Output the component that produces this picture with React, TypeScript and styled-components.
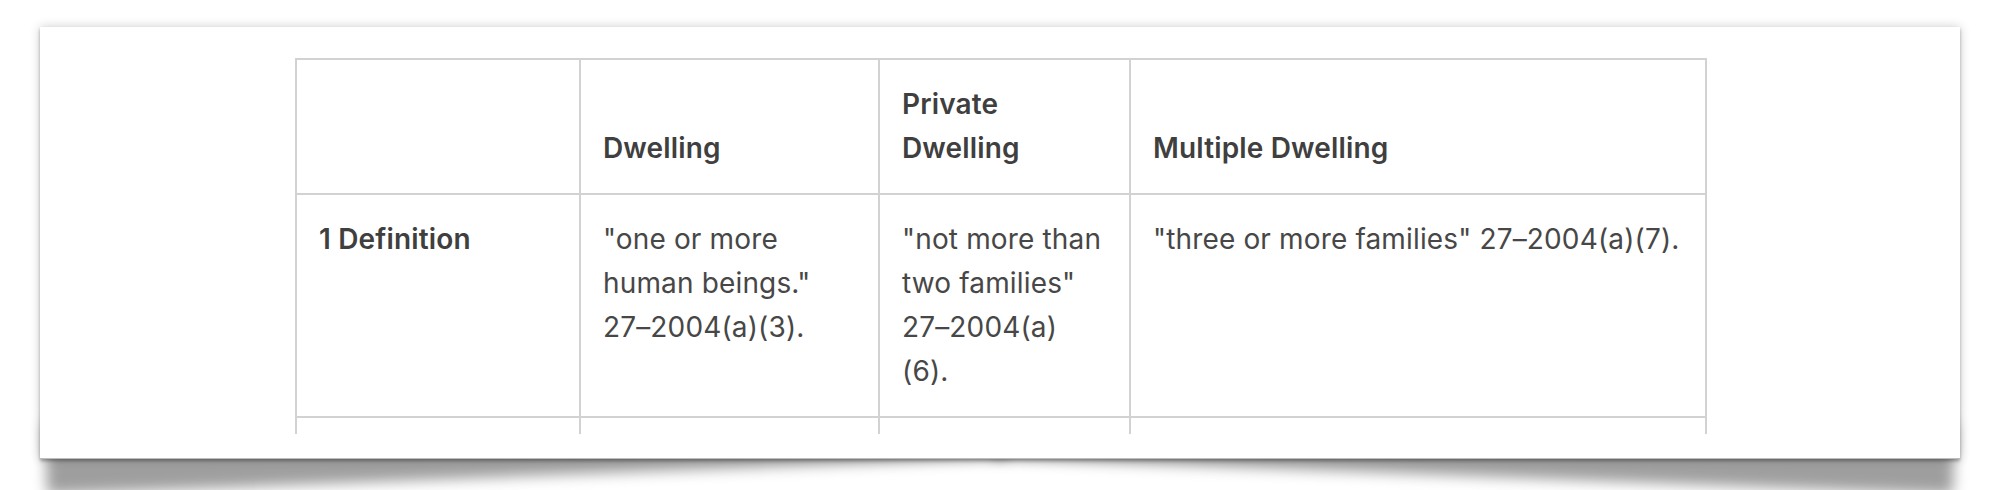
import React from "react";
import styled, { createGlobalStyle } from "styled-components";

const Global = createGlobalStyle`
  html, body { margin: 0; padding: 0; background: #ffffff; }
  body { font-family: Inter, "Noto Sans", "Liberation Sans", sans-serif; overflow: hidden; }
`;

const Page = styled.div`
  position: relative;
  z-index: 0;
  padding: 27px 40px 0;
  height: 490px;
  box-sizing: border-box;
  overflow: hidden;
`;

const Card = styled.div`
  position: relative;
  background: #ffffff;
  height: 432px;
  box-sizing: border-box;
  padding: 31px 0 25px;
  display: flex;
  justify-content: center;
  border-bottom: 1px solid #bdbdbd;
  box-shadow: 0 2px 3px rgba(0, 0, 0, 0.28), 0 0 10px rgba(0, 0, 0, 0.2);

  &::before,
  &::after {
    content: "";
    position: absolute;
    z-index: -1;
    bottom: 22px;
    width: 50%;
    height: 70px;
    box-shadow: 0 40px 14px rgba(0, 0, 0, 0.38);
  }
  &::before {
    left: 4px;
    transform: rotate(-2.2deg);
  }
  &::after {
    right: 4px;
    transform: rotate(2.2deg);
  }
`;

const Clip = styled.div`
  width: 1414px;
  padding: 0 2px;
  box-sizing: border-box;
  height: 376px;
  overflow: hidden;
`;

const Table = styled.table`
  width: 1410px;
  table-layout: fixed;
  border-collapse: collapse;
  color: #444444;
  font-size: 28px;
  letter-spacing: 0.15px;
  line-height: 44px;
`;

const HeadCell = styled.th`
  border: 2px solid #d2d2d2;
  padding: 22px 22px 23px;
  text-align: left;
  vertical-align: bottom;
  font-weight: 600;
  color: #3f3f3f;
`;

const Cell = styled.td<{ $strong?: boolean }>`
  border: 2px solid #d2d2d2;
  padding: 22px 22px 23px;
  text-align: left;
  vertical-align: top;
  font-weight: ${(p) => (p.$strong ? 600 : 400)};
  color: ${(p) => (p.$strong ? "#3f3f3f" : "#474747")};
`;

const Cite = styled.span`
  white-space: nowrap;
`;

const widths = [284, 299, 251, 576];

function Citation({ section, sub, split }: { section: string; sub: string; split?: boolean }) {
  return (
    <>
      <Cite>{section}</Cite>
      {split ? <br /> : <wbr />}
      <Cite>({sub}).</Cite>
    </>
  );
}

export default function App() {
  return (
    <>
      <Global />
      <Page>
        <Card>
          <Clip>
            <Table>
              <colgroup>
                {widths.map((w, i) => (
                  <col key={i} style={{ width: w }} />
                ))}
              </colgroup>
              <thead>
                <tr>
                  <HeadCell></HeadCell>
                  <HeadCell>Dwelling</HeadCell>
                  <HeadCell>Private Dwelling</HeadCell>
                  <HeadCell>Multiple Dwelling</HeadCell>
                </tr>
              </thead>
              <tbody>
                <tr>
                  <Cell $strong>1 Definition</Cell>
                  <Cell>
                    "one or more human beings." <Citation section="27–2004(a)" sub="3" />
                  </Cell>
                  <Cell>
                    "not more than two families" <Citation section="27–2004(a)" sub="6" split />
                  </Cell>
                  <Cell>
                    "three or more families" <Citation section="27–2004(a)" sub="7" />
                  </Cell>
                </tr>
                <tr>
                  <Cell $strong>&nbsp;</Cell>
                  <Cell>&nbsp;</Cell>
                  <Cell>&nbsp;</Cell>
                  <Cell>&nbsp;</Cell>
                </tr>
              </tbody>
            </Table>
          </Clip>
        </Card>
      </Page>
    </>
  );
}
